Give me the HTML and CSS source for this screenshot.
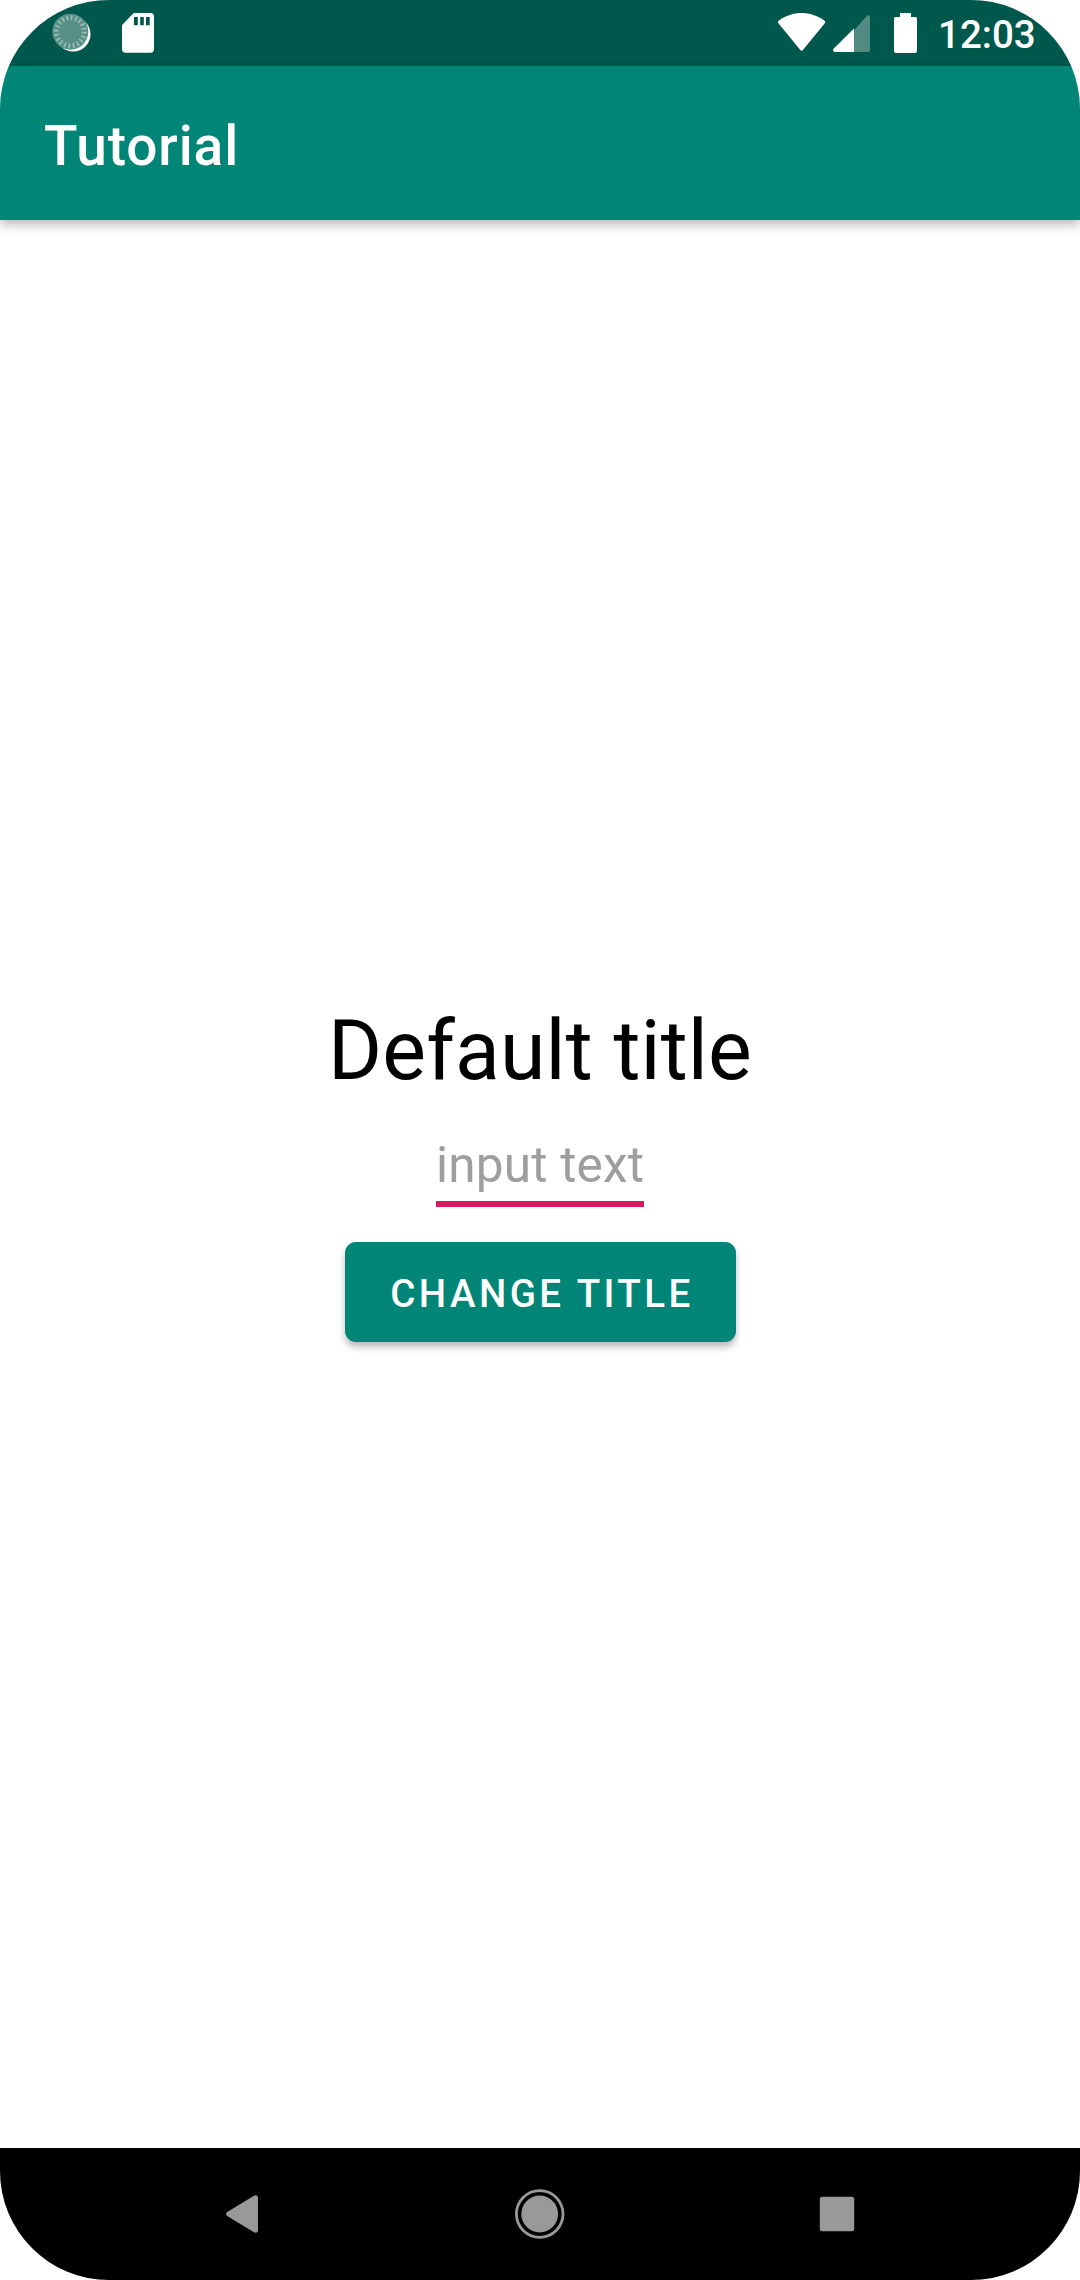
FILE: index.html
```html
<!DOCTYPE html>
<html lang="en">
<head>
<meta charset="utf-8">
<title>Tutorial</title>
<link rel="stylesheet" href="styles.css">
</head>
<body>
<div class="screen">
  <div class="status-bar">
    <div class="status-group">
      <svg class="icon-sync" width="42" height="42" viewBox="50 11 42 42">
        <defs><filter id="soft" x="-20%" y="-20%" width="140%" height="140%"><feGaussianBlur stdDeviation=".7"/></filter></defs>
        <circle cx="73.2" cy="34.2" r="17.3" fill="#fff" filter="url(#soft)"/>
        <circle cx="70.3" cy="31.7" r="18" fill="#578f86"/>
        <circle cx="70.3" cy="31.7" r="14" fill="none" stroke="#9abbb5" stroke-width="5" stroke-dasharray="1.7 2.6982"/>
      </svg>
      <svg width="32" height="40" viewBox="0 0 32 40">
        <path fill="#fff" fill-rule="evenodd" d="M12.2 0H28.5Q32 0 32 3.5V36Q32 39.7 28.5 39.7H3.5Q0 39.7 0 36V13Q0 12 .8 11.2L11 .7Q11.6 0 12.2 0ZM12 4V12.3H15.8V4ZM18.2 4V12.3H21.8V4ZM24 4V12.3H27.7V4Z"/>
      </svg>
    </div>
    <div class="status-group status-right">
      <svg width="48" height="40" viewBox="0 0 48 40">
        <path fill="#fff" d="M.4 10.2C-.3 9.4-.2 8.3.7 7.7C15-2.5 32.2-2.5 46.5 7.7C47.4 8.3 47.5 9.4 46.8 10.2L24.9 37Q23.6 38.6 22.3 37Z"/>
      </svg>
      <svg class="icon-cell" width="37" height="40" viewBox="0 0 37 40">
        <path fill="#508b82" d="M21 17.2 34 2.7Q36.9.8 37 4V37Q37 39 35 39H21Z"/>
        <path fill="#fff" d="M21 15.4V39H1.6Q-.6 38.6.3 36.1Z"/>
      </svg>
      <svg class="icon-battery" width="23" height="40" viewBox="0 0 23 40">
        <path fill="#fff" d="M6 0H17V4H21.5Q23 4 23 5.5V38Q23 40 21 40H2Q0 40 0 38V5.5Q0 4 1.5 4H6Z"/>
      </svg>
      <span class="clock">12:03</span>
    </div>
  </div>
  <header class="app-bar"><h1 class="app-title">Tutorial</h1></header>
  <main class="content">
    <div class="headline">Default title</div>
    <div class="field">input text</div>
    <button class="action">CHANGE TITLE</button>
  </main>
  <nav class="nav-bar">
    <svg width="50" height="50" viewBox="0 0 50 50"><path fill="#999" d="M7.2 23.1 33.5 7Q38 5 38 9V41Q38 45 33.5 43L7.2 26.9Q4.8 25 7.2 23.1Z"/></svg>
    <svg width="50" height="50" viewBox="0 0 50 50"><circle cx="24.7" cy="25" r="23.3" fill="none" stroke="#999" stroke-width="2.8"/><circle cx="24.7" cy="25" r="18.4" fill="#999"/></svg>
    <svg width="50" height="50" viewBox="0 0 50 50"><rect x="9.8" y="7.8" width="34.4" height="34.4" rx="2.5" fill="#999"/></svg>
  </nav>
</div>
</body>
</html>
```
FILE: styles.css
```css
body {
  margin: 0;
  background: #fff;
  font-family: Roboto, "Noto Sans", sans-serif;
}

.screen {
  display: flex;
  flex-direction: column;
  width: 1080px;
  height: 2280px;
  border-radius: 109px;
  overflow: hidden;
  background: #fff;
}

svg {
  display: block;
  flex: none;
}

.status-bar {
  display: flex;
  justify-content: space-between;
  box-sizing: border-box;
  height: 66px;
  padding: 13px 44px 0 50px;
  background: #00574b;
}

.status-group {
  display: flex;
  align-items: flex-start;
  gap: 30px;
}

.icon-sync {
  margin-top: -2px;
}

.status-right {
  gap: 0;
}

.icon-cell {
  margin-left: 7px;
}

.icon-battery {
  margin-left: 24px;
}

.clock {
  width: 98px;
  margin-left: 21px;
  color: #fff;
  font-size: 38.5px;
  font-weight: 500;
  line-height: 44px;
}

.app-bar {
  position: relative;
  box-sizing: border-box;
  height: 154px;
  padding: 6px 44px 0;
  background: #008577;
  box-shadow: 0 4px 11px rgba(0, 0, 0, 0.3);
}

.app-title {
  margin: 0;
  color: #fff;
  font-size: 55px;
  font-weight: 500;
  letter-spacing: 0.9px;
  line-height: 148px;
}

.content {
  display: flex;
  flex: 1;
  flex-direction: column;
  align-items: center;
  padding-top: 782px;
}

.headline {
  color: #000;
  font-size: 82.5px;
  letter-spacing: 0.12px;
  line-height: 97px;
}

.field {
  width: 208px;
  margin-top: 37px;
  padding-bottom: 7px;
  border-bottom: 6px solid #d81b60;
  color: #9e9e9e;
  font-size: 49.5px;
  letter-spacing: 0.2px;
  line-height: 58px;
  white-space: nowrap;
}

.action {
  width: 391px;
  height: 100px;
  margin: 35px 0 0 1px;
  padding: 3px 0 0 3px;
  border: 0;
  border-radius: 11px;
  background: #008577;
  box-shadow: 0 5px 7px rgba(0, 0, 0, 0.27);
  color: #fff;
  font-family: inherit;
  font-size: 38.5px;
  font-weight: 500;
  letter-spacing: 3.44px;
}

.nav-bar {
  display: flex;
  align-items: center;
  justify-content: space-between;
  box-sizing: border-box;
  height: 132px;
  padding: 0 220px;
  background: #000;
}
```
